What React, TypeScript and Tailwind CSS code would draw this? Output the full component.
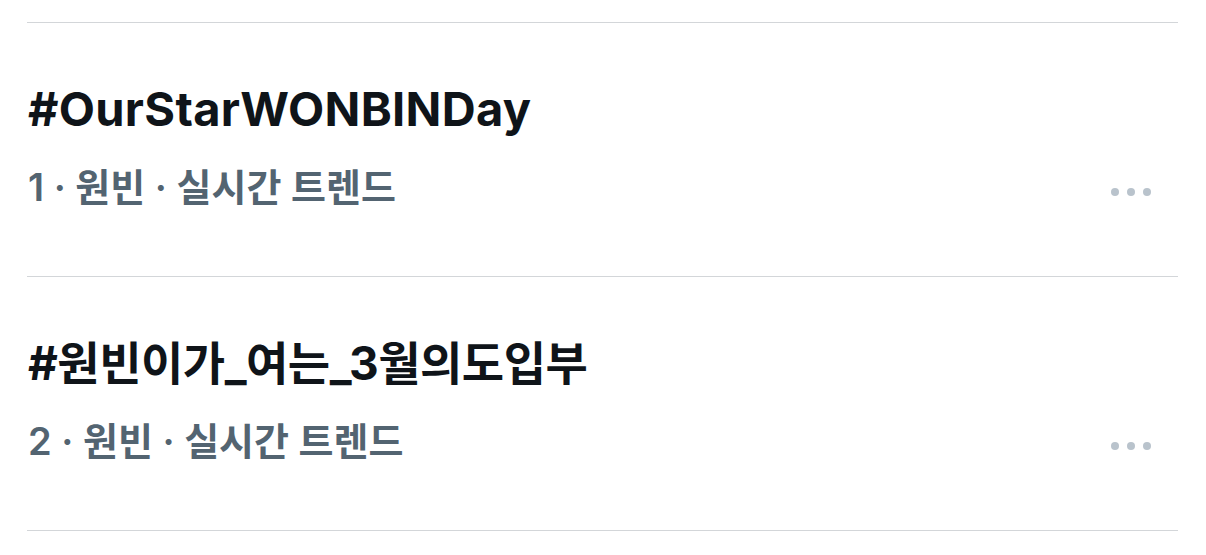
import React from "react";

const trends = [
  { rank: 1, title: "#OurStarWONBINDay", titleClass: "text-[47px] tracking-[0.3px]" },
  { rank: 2, title: "#원빈이가_여는_3월의도입부", titleClass: "text-[46px] tracking-[-0.5px]" },
];

const MoreDots = () => (
  <svg width="40" height="8" viewBox="0 0 40 8" className="text-[#b9c3cc]">
    <circle cx="4" cy="4" r="4" fill="currentColor" />
    <circle cx="20" cy="4" r="4" fill="currentColor" />
    <circle cx="36" cy="4" r="4" fill="currentColor" />
  </svg>
);

const App = () => {
  return (
    <div
      className="w-[1206px] h-[555px] bg-white overflow-hidden pl-[27px] pr-[28px] pt-[22px]"
      style={{ fontFamily: '"Inter", "Noto Sans CJK KR", sans-serif' }}
    >
      <div className="border-t border-[#d3d6d9]">
        {trends.map((t) => (
          <div
            key={t.rank}
            className="h-[254px] border-b border-[#d3d6d9] flex items-center justify-between"
          >
            <div className="flex flex-col pl-[1px] pb-[8px]">
              <div className={`${t.titleClass} leading-[56px] font-bold text-[#0f1419]`}>
                {t.title}
              </div>
              <div className="mt-[27px] text-[38px] leading-[46px] font-semibold text-[#536471]">
                {t.rank} · 원빈 · 실시간 트렌드
              </div>
            </div>
            <div className="pr-[27px] pt-[84px]">
              <MoreDots />
            </div>
          </div>
        ))}
      </div>
    </div>
  );
};

export default App;
